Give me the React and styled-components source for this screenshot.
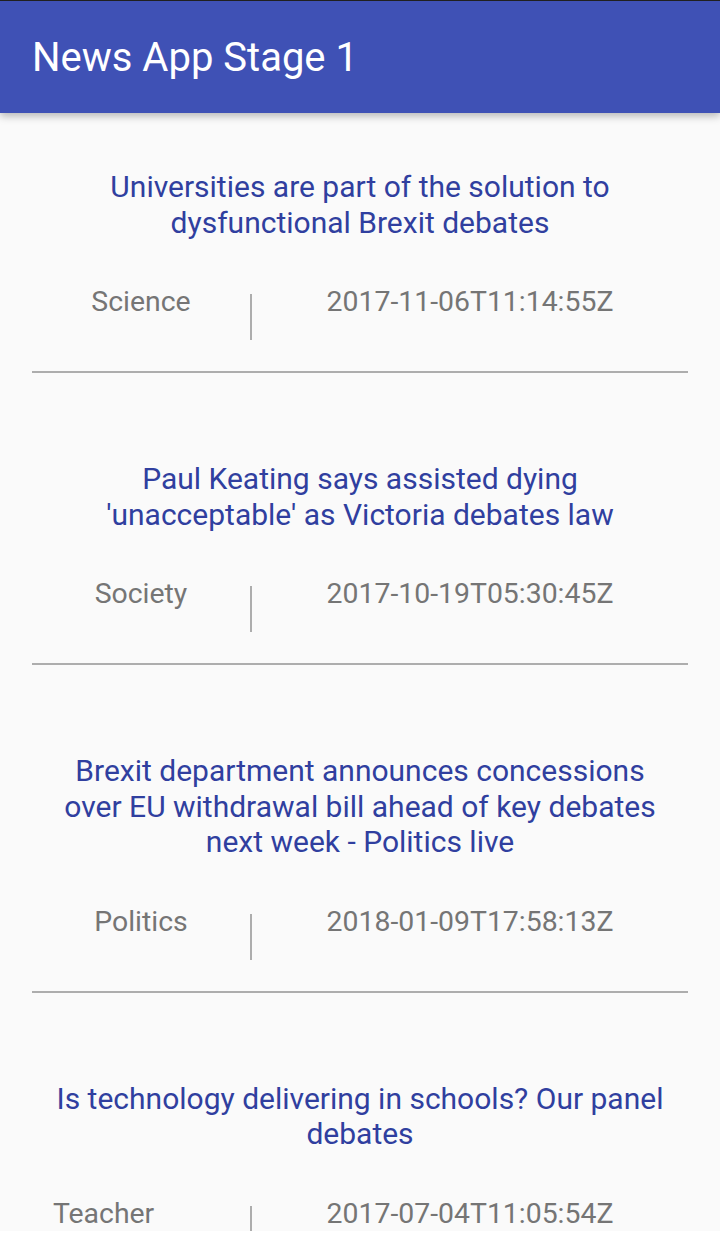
import React from "react";
import styled, { createGlobalStyle } from "styled-components";

const GlobalStyle = createGlobalStyle`
  html, body {
    margin: 0;
    padding: 0;
    background: #ffffff;
  }
  body {
    font-family: Roboto, "Noto Sans", "Liberation Sans", sans-serif;
  }
`;

const Screen = styled.div`
  width: 720px;
  border-top: 1px solid #222222;
`;

const AppBar = styled.header`
  position: relative;
  z-index: 1;
  height: 112px;
  display: flex;
  align-items: center;
  padding-left: 32px;
  background: #3f51b5;
  color: #ffffff;
  font-size: 40px;
  box-shadow: 0 3px 8px rgba(0, 0, 0, 0.28);
`;

const List = styled.main`
  height: 1118px;
  overflow: hidden;
  background: #fafafa;
`;

const Item = styled.article`
  padding: 56px 32px 0;
`;

const Title = styled.h2`
  margin: 0;
  padding: 0 16px;
  font-size: 30px;
  font-weight: 400;
  line-height: 35.5px;
  text-align: center;
  color: #303f9f;
`;

const Meta = styled.div`
  display: grid;
  grid-template-columns: 1fr 2px 2fr;
  align-items: start;
  margin-top: 44px;
`;

const MetaText = styled.span`
  padding-left: ${(p) => (p.$start ? "21px" : "0")};
  font-size: 28.4px;
  line-height: 35px;
  text-align: ${(p) => (p.$start ? "left" : "center")};
  color: #757575;
`;

const VLine = styled.span`
  width: 2px;
  height: 46px;
  margin-top: 10px;
  background: #adadad;
`;

const Separator = styled.hr`
  height: 2px;
  margin: 31px 0 32px;
  border: 0;
  background: #adadad;
`;

const news = [
  {
    title: "Universities are part of the solution to dysfunctional Brexit debates",
    section: "Science",
    date: "2017-11-06T11:14:55Z",
  },
  {
    title: "Paul Keating says assisted dying 'unacceptable' as Victoria debates law",
    section: "Society",
    date: "2017-10-19T05:30:45Z",
  },
  {
    title:
      "Brexit department announces concessions over EU withdrawal bill ahead of key debates next week - Politics live",
    section: "Politics",
    date: "2018-01-09T17:58:13Z",
  },
  {
    title: "Is technology delivering in schools? Our panel debates",
    section: "Teacher",
    date: "2017-07-04T11:05:54Z",
    startAligned: true,
  },
];

export default function App() {
  return (
    <>
      <GlobalStyle />
      <Screen>
        <AppBar>News App Stage 1</AppBar>
        <List>
          {news.map((n) => (
            <Item key={n.date}>
              <Title>{n.title}</Title>
              <Meta>
                <MetaText $start={n.startAligned}>{n.section}</MetaText>
                <VLine />
                <MetaText>{n.date}</MetaText>
              </Meta>
              <Separator />
            </Item>
          ))}
        </List>
      </Screen>
    </>
  );
}
